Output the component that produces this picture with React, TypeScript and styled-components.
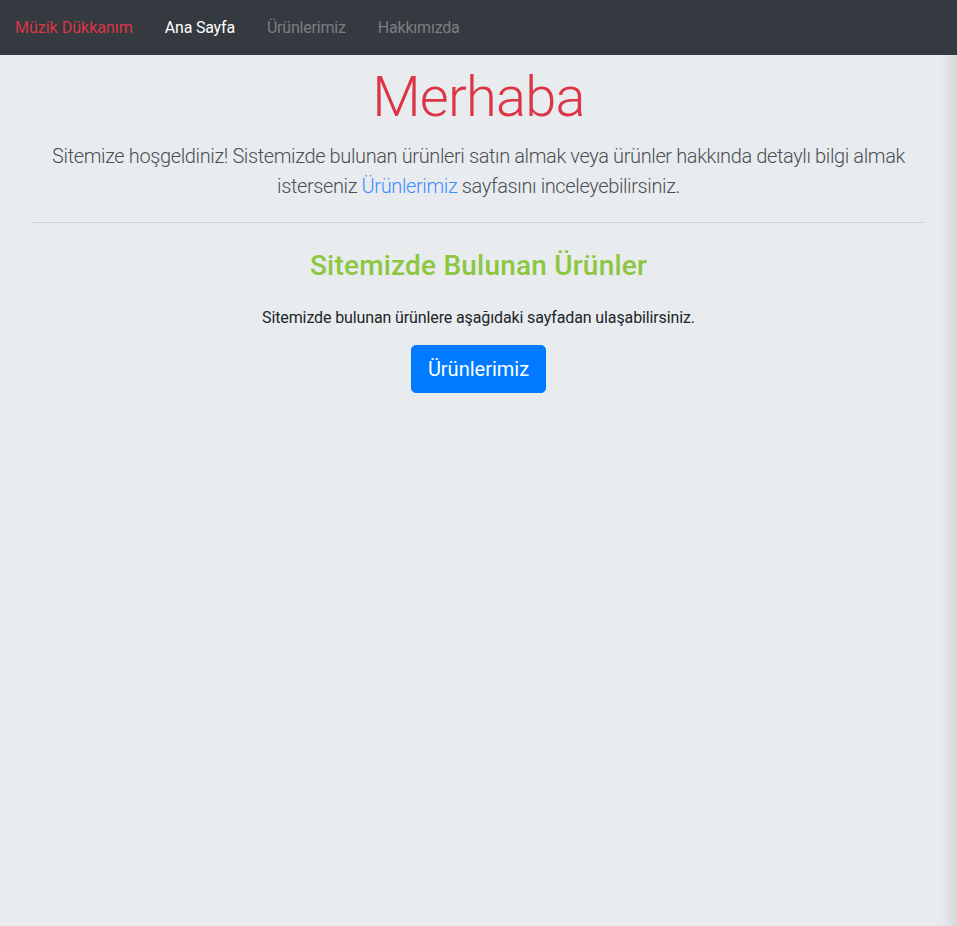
import React from "react";
import styled, { createGlobalStyle } from "styled-components";

const GlobalStyle = createGlobalStyle`
  html, body {
    margin: 0;
    padding: 0;
    background: #e9ecef;
  }
  body {
    font-family: Roboto, "Open Sans", "Liberation Sans", sans-serif;
    color: #212529;
  }
  * { box-sizing: border-box; }
`;

const Navbar = styled.nav`
  height: 55px;
  background: #343a40;
  display: flex;
  align-items: center;
  padding: 0 15px;
`;

const Brand = styled.a`
  color: #dc3545;
  font-size: 16px;
  margin-right: 16px;
  text-decoration: none;
  white-space: nowrap;
`;

const NavLink = styled.a<{ $active?: boolean }>`
  color: ${(p) => (p.$active ? "#ffffff" : "rgba(255,255,255,0.36)")};
  font-size: 16px;
  padding: 0 16px;
  letter-spacing: -0.2px;
  text-decoration: none;
  white-space: nowrap;
`;

const Main = styled.main`
  position: relative;
  min-height: calc(100vh - 55px);
  background: #e9ecef;
  padding: 9px 32px 32px;
  text-align: center;
  &::after {
    content: "";
    position: absolute;
    top: 0;
    right: 0;
    bottom: 0;
    width: 16px;
    background: linear-gradient(to right, rgba(0,0,0,0), rgba(0,0,0,0.09));
    pointer-events: none;
  }
`;

const Title = styled.h1`
  margin: 0 0 10px;
  font-size: 56px;
  font-weight: 300;
  line-height: 1.2;
  letter-spacing: -0.8px;
  color: #dc3545;
`;

const Lead = styled.p`
  margin: 0;
  font-size: 20px;
  font-weight: 300;
  line-height: 1.5;
  letter-spacing: -0.38px;
  color: #4a4f54;
`;

const InlineLink = styled.a`
  color: #3b8cff;
  text-decoration: none;
`;

const Divider = styled.hr`
  margin: 21px 0 26px;
  border: 0;
  border-top: 1px solid rgba(0,0,0,0.1);
`;

const Heading = styled.h3`
  margin: 0 0 23px;
  font-size: 28px;
  font-weight: 500;
  line-height: 1.2;
  letter-spacing: 0.2px;
  color: #8dc63f;
`;

const Text = styled.p`
  margin: 0 0 15px;
  font-size: 16px;
  line-height: 1.5;
  letter-spacing: -0.12px;
  color: #212529;
`;

const Button = styled.a`
  display: inline-block;
  background: #007bff;
  color: #fff;
  border: 1px solid #007bff;
  border-radius: 4.8px;
  font-size: 20px;
  line-height: 1.5;
  padding: 8px 16px;
  text-decoration: none;
`;

export default function App() {
  return (
    <>
      <GlobalStyle />
      <Navbar>
        <Brand href="#">Müzik Dükkanım</Brand>
        <NavLink href="#" $active>Ana Sayfa</NavLink>
        <NavLink href="#">Ürünlerimiz</NavLink>
        <NavLink href="#">Hakkımızda</NavLink>
      </Navbar>
      <Main>
        <Title>Merhaba</Title>
        <Lead>
          Sitemize hoşgeldiniz! Sistemizde bulunan ürünleri satın almak veya ürünler hakkında detaylı bilgi almak
          isterseniz <InlineLink href="#">Ürünlerimiz</InlineLink> sayfasını inceleyebilirsiniz.
        </Lead>
        <Divider />
        <Heading>Sitemizde Bulunan Ürünler</Heading>
        <Text>Sitemizde bulunan ürünlere aşağıdaki sayfadan ulaşabilirsiniz.</Text>
        <Button href="#">Ürünlerimiz</Button>
      </Main>
    </>
  );
}
